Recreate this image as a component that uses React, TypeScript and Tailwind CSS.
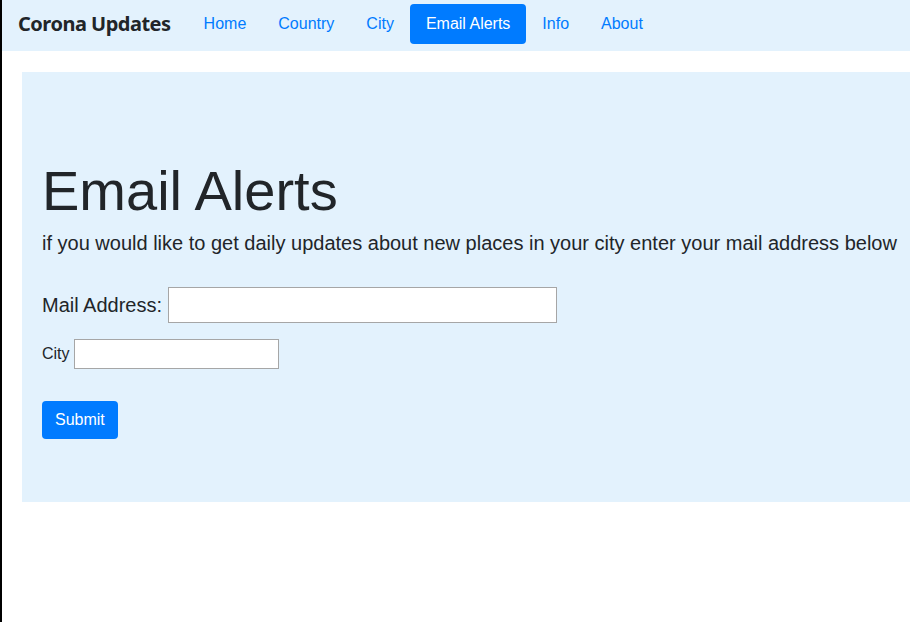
import { useState } from 'react';

const LINKS = ['Home', 'Country', 'City', 'Email Alerts', 'Info', 'About'];

export default function App() {
  const [mail, setMail] = useState('');
  const [city, setCity] = useState('');
  const active = 'Email Alerts';

  return (
    <div className="min-h-screen overflow-hidden border-l-2 border-black bg-white text-[#212529] font-['Liberation_Sans',Arial,sans-serif]">
      {/* Navbar */}
      <nav className="flex h-[51px] items-start bg-[#e3f2fd] pl-4 pt-1">
        <span className="mr-[17px] flex h-10 items-center font-['Noto_Sans',sans-serif] text-[20px] font-bold tracking-[-0.5px] text-[#212529]">
          Corona Updates
        </span>
        {LINKS.map((l) => (
          <a
            key={l}
            href="#"
            className={
              l === active
                ? 'flex h-10 items-center rounded bg-[#007bff] px-4 text-base text-white'
                : 'flex h-10 items-center px-4 text-base text-[#007bff]'
            }
          >
            {l}
          </a>
        ))}
      </nav>

      {/* Jumbotron */}
      <div className="ml-5 mt-[21px] h-[430px] bg-[#e3f2fd] px-5 pt-[85px]">
        <h1 className="text-[56px] font-normal leading-[1.2]">Email Alerts</h1>
        <p className="mt-1 whitespace-nowrap text-xl leading-normal">
          if you would like to get daily updates about new places in your city enter your mail address below
        </p>

        <form className="mt-[29px]" onSubmit={(e) => e.preventDefault()}>
          <div className="flex items-center gap-[6px]">
            <label className="text-xl leading-normal">Mail Address:</label>
            <input
              value={mail}
              onChange={(e) => setMail(e.target.value)}
              className="h-9 w-[389px] border border-[#a6a6a6] bg-white px-1 outline-none"
            />
          </div>
          <div className="mt-4 flex items-center gap-1">
            <label className="text-base leading-normal">City</label>
            <input
              value={city}
              onChange={(e) => setCity(e.target.value)}
              className="h-[30px] w-[205px] border border-[#a6a6a6] bg-white px-1 outline-none"
            />
          </div>
          <button
            type="submit"
            className="mt-8 h-[38px] rounded bg-[#007bff] px-[13px] text-base text-white"
          >
            Submit
          </button>
        </form>
      </div>
    </div>
  );
}
